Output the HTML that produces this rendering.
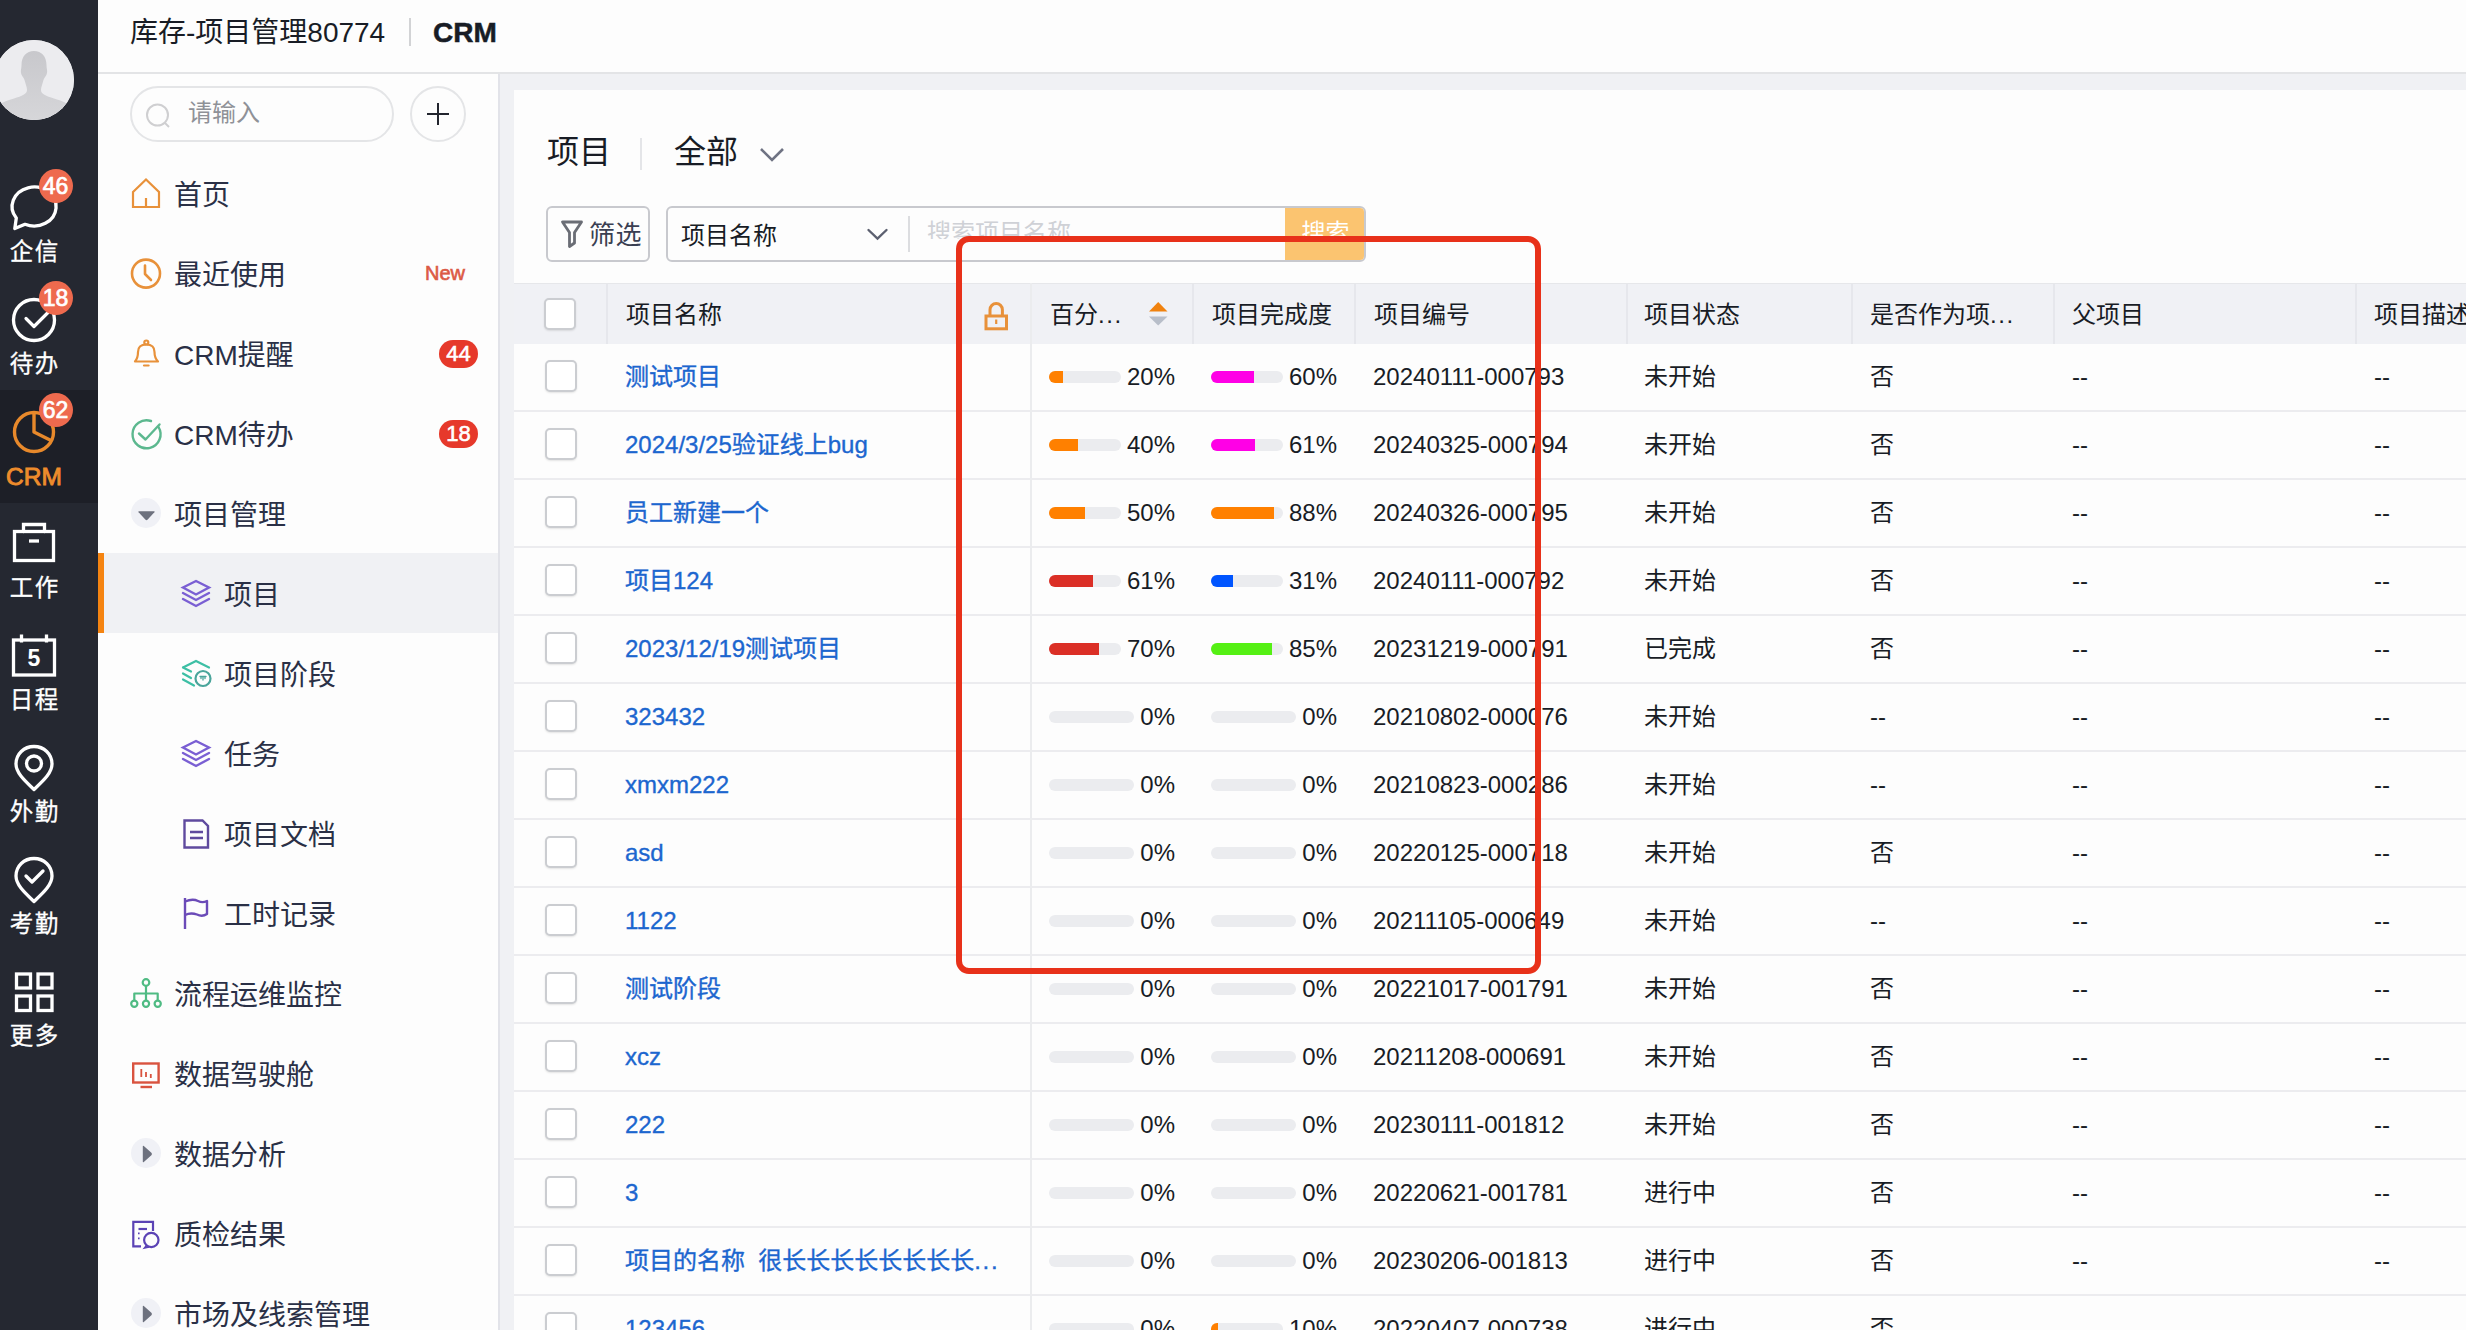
<!DOCTYPE html>
<html lang="zh-CN">
<head>
<meta charset="utf-8">
<title>CRM</title>
<style>
*{box-sizing:border-box;margin:0;padding:0}
html,body{width:2466px;height:1330px;overflow:hidden;background:#fdfdfd}
body{font-family:"Liberation Sans","Noto Sans CJK SC",sans-serif;color:#181c25;position:relative}
.abs{position:absolute}
/* dark side bar */
#side{position:absolute;left:0;top:0;width:98px;height:1330px;background:#252831}
#side .sel{position:absolute;left:0;top:390px;width:98px;height:113px;background:#1d1f27}
#avatar{position:absolute;left:-6px;top:40px;width:80px;height:80px;border-radius:50%;background:#ececef;overflow:hidden}
.sl{position:absolute;left:0;width:68px;text-align:center;color:#fff;font-size:23.5px;line-height:30px;letter-spacing:1.6px;padding-left:1.6px;-webkit-text-stroke:0.3px #fff}
.si{position:absolute}
.bd{position:absolute;width:34px;height:34px;border-radius:17px;background:#ee6a4e;color:#fff;font-size:23px;line-height:34px;text-align:center;-webkit-text-stroke:0.7px #fff}
/* header */
#hdr{position:absolute;left:98px;top:0;width:2368px;height:74px;background:#fdfdfd;border-bottom:2px solid #e3e4e6}
#hdr .t1{position:absolute;left:32px;top:15px;font-size:28px;line-height:36px;color:#181c25}
#hdr .sp{position:absolute;left:311px;top:18px;width:2px;height:28px;background:#d2d3d5}
#hdr .t2{position:absolute;left:335px;top:15px;font-size:28px;line-height:36px;font-weight:bold;color:#181c25;-webkit-text-stroke:0.5px #181c25}
/* nav */
#nav{position:absolute;left:98px;top:74px;width:400px;height:1256px;background:#fdfdfd}
#navb{position:absolute;left:498px;top:74px;width:2px;height:1256px;background:#e2e3e9}
.ni{position:absolute;left:0;width:400px;height:80px}
.ni .tx{position:absolute;top:25px;font-size:28px;line-height:36px;color:#2a3046;white-space:nowrap}
.ni svg{position:absolute}
.ni.on{background:#f0f1f4}
.ni.on:before{content:"";position:absolute;left:0;top:0;width:6px;height:80px;background:#f58411}
.nb{position:absolute;left:341px;top:27px;width:39px;height:28px;border-radius:14px;background:#e6392b;color:#fff;font-size:22px;line-height:28px;text-align:center;-webkit-text-stroke:0.6px #fff}
.arr{position:absolute;left:33px;top:25px;width:30px;height:30px;border-radius:50%;background:#f0f1f6}
/* main */
#main{position:absolute;left:500px;top:74px;width:1966px;height:1256px;background:#f0f1f4}
#card{position:absolute;left:514px;top:90px;width:1952px;height:1240px;background:#fdfdfd}
.h1{position:absolute;top:130px;font-size:32px;line-height:44px;color:#181c25}
#fbtn{position:absolute;left:546px;top:206px;width:104px;height:56px;border:2px solid #c8c9ce;border-radius:6px;background:#fdfdfd}
#fbtn span{position:absolute;left:41px;top:9px;font-size:26px;letter-spacing:.5px;line-height:36px;color:#3a3f52}
#sbox{position:absolute;left:666px;top:206px;width:700px;height:56px;border:2px solid #c8c9ce;border-radius:6px;background:#fdfdfd;overflow:hidden}
#sbox .s1{position:absolute;left:13px;top:10px;font-size:24px;line-height:36px;color:#181c25}
#sbox .dv{position:absolute;left:240px;top:8px;width:2px;height:36px;background:#dcdde0}
#sbox .ph{position:absolute;left:259px;top:7px;height:24px;overflow:hidden;font-size:24px;line-height:36px;color:#cfd1d6;white-space:nowrap}
#sbox .go{position:absolute;left:617px;top:-2px;width:81px;height:56px;background:#fbc470;color:#fff;font-size:24px;line-height:36px;text-align:center}
#sbox .go span{display:block;height:33px;overflow:hidden;padding-top:9px}
/* table */
#th{position:absolute;left:514px;top:283px;width:1952px;height:61px;background:#f0f1f5;border-top:1px solid #e6e7ea}
#th .h{position:absolute;top:13px;font-size:24px;line-height:36px;color:#181c25;white-space:nowrap}
#th .vl{position:absolute;top:0;width:2px;height:61px;background:#e6e7ec}
.row{position:absolute;left:514px;width:1952px;height:68px;border-bottom:2px solid #ececef;background:#fdfdfd}
.cb{position:absolute;left:31px;top:16px;width:32px;height:32px;border:2px solid #cbcdd1;border-radius:5px;background:#fff;box-shadow:0 1px 2px rgba(0,0,0,.10)}
.c{position:absolute;top:15px;font-size:24px;line-height:36px;white-space:nowrap;color:#181c25}
.c a{color:#1c66cf;-webkit-text-stroke:0.35px #1c66cf}
.c-name{left:111px}
.c-p1{left:535px;width:126px}
.c-p2{left:697px;width:126px}
.c-no{left:859px}
.c-st{left:1130px}
.c-is{left:1356px}
.c-pa{left:1558px}
.c-de{left:1860px}
.pg{display:flex;align-items:center;width:126px}
.tr{flex:1;height:12px;border-radius:6px;background:#ebecef;overflow:hidden;display:block;position:relative;top:0}
.tr i{display:block;height:12px}
.pv{margin-left:6px}
#fix{position:absolute;left:1030px;top:283px;width:2px;height:1047px;background:#ebecee}
#red{position:absolute;left:956px;top:236px;width:585px;height:738px;border:6.5px solid #e8311a;border-radius:13px}
.dt{font-weight:normal;letter-spacing:1.6px}
</style>
</head>
<body>
<div id="hdr"><span class="t1">库存-项目管理80774</span><span class="sp"></span><span class="t2">CRM</span></div>

<div id="nav">
  <div class="abs" style="left:32px;top:12px;width:264px;height:56px;border:2px solid #e4e5e7;border-radius:28px"></div>
  <svg class="abs" style="left:46px;top:28px" width="30" height="30" viewBox="0 0 30 30"><circle cx="13.5" cy="13" r="10.5" fill="none" stroke="#cfcfd1" stroke-width="2"/><path d="M21 21l4 4" stroke="#cfcfd1" stroke-width="2" fill="none"/></svg>
  <span class="abs" style="left:90px;top:21px;font-size:24px;line-height:36px;color:#8f9197">请输入</span>
  <div class="abs" style="left:312px;top:12px;width:56px;height:56px;border:2px solid #e4e5e7;border-radius:28px"></div>
  <svg class="abs" style="left:328px;top:28px" width="24" height="24" viewBox="0 0 24 24"><path d="M12 1v22M1 12h22" stroke="#22252e" stroke-width="2" fill="none"/></svg>

  <div class="ni" style="top:79px"><span class="tx" style="left:76px">首页</span></div>
  <div class="ni" style="top:159px"><span class="tx" style="left:76px">最近使用</span><span class="abs" style="left:327px;top:27px;font-size:20px;line-height:26px;color:#dc5a45;-webkit-text-stroke:0.6px #dc5a45">New</span></div>
  <div class="ni" style="top:239px"><span class="tx" style="left:76px">CRM提醒</span><span class="nb">44</span></div>
  <div class="ni" style="top:319px"><span class="tx" style="left:76px">CRM待办</span><span class="nb">18</span></div>
  <div class="ni" style="top:399px"><span class="arr"></span><span class="tx" style="left:76px">项目管理</span></div>
  <div class="ni on" style="top:479px"><span class="tx" style="left:126px">项目</span></div>
  <div class="ni" style="top:559px"><span class="tx" style="left:126px">项目阶段</span></div>
  <div class="ni" style="top:639px"><span class="tx" style="left:126px">任务</span></div>
  <div class="ni" style="top:719px"><span class="tx" style="left:126px">项目文档</span></div>
  <div class="ni" style="top:799px"><span class="tx" style="left:126px">工时记录</span></div>
  <div class="ni" style="top:879px"><span class="tx" style="left:76px">流程运维监控</span></div>
  <div class="ni" style="top:959px"><span class="tx" style="left:76px">数据驾驶舱</span></div>
  <div class="ni" style="top:1039px"><span class="arr"></span><span class="tx" style="left:76px">数据分析</span></div>
  <div class="ni" style="top:1119px"><span class="tx" style="left:76px">质检结果</span></div>
  <div class="ni" style="top:1199px"><span class="arr"></span><span class="tx" style="left:76px">市场及线索管理</span></div>
</div>
<div id="navb"></div>

<div id="main"></div>
<div id="card"></div>
<span class="h1" style="left:547px">项目</span>
<div class="abs" style="left:640px;top:138px;width:2px;height:32px;background:#e4e5e8"></div>
<span class="h1" style="left:674px">全部</span>
<svg class="abs" style="left:758px;top:146px" width="28" height="18" viewBox="0 0 28 18"><path d="M3 3l11 11 11-11" fill="none" stroke="#6f7383" stroke-width="2.6"/></svg>

<div id="fbtn"><span>筛选</span></div>
<div id="sbox"><span class="s1">项目名称</span><span class="dv"></span><span class="ph">搜索项目名称</span><div class="go"><span>搜索</span></div></div>

<div id="th">
  <span class="cb" style="top:14px;left:30px"></span>
  <span class="vl" style="left:92px"></span>
  <span class="h" style="left:112px">项目名称</span>
  <span class="vl" style="left:516px"></span>
  <span class="h" style="left:536px">百分<b class="dt">...</b></span>
  <span class="vl" style="left:678px"></span>
  <span class="h" style="left:698px">项目完成度</span>
  <span class="vl" style="left:840px"></span>
  <span class="h" style="left:860px">项目编号</span>
  <span class="vl" style="left:1112px"></span>
  <span class="h" style="left:1130px">项目状态</span>
  <span class="vl" style="left:1337px"></span>
  <span class="h" style="left:1356px">是否作为项<b class="dt">...</b></span>
  <span class="vl" style="left:1539px"></span>
  <span class="h" style="left:1558px">父项目</span>
  <span class="vl" style="left:1841px"></span>
  <span class="h" style="left:1860px">项目描述</span>
</div>
<div class="row" style="top:344px">
<span class="cb"></span>
<span class="c c-name"><a>测试项目</a></span>
<span class="c c-p1"><span class="pg"><span class="tr"><i style="width:20%;background:#ff8000"></i></span><span class="pv">20%</span></span></span>
<span class="c c-p2"><span class="pg"><span class="tr"><i style="width:60%;background:#ff00e6"></i></span><span class="pv">60%</span></span></span>
<span class="c c-no">20240111-000793</span>
<span class="c c-st">未开始</span>
<span class="c c-is">否</span>
<span class="c c-pa">--</span>
<span class="c c-de">--</span>
</div>
<div class="row" style="top:412px">
<span class="cb"></span>
<span class="c c-name"><a>2024/3/25验证线上bug</a></span>
<span class="c c-p1"><span class="pg"><span class="tr"><i style="width:40%;background:#ff8000"></i></span><span class="pv">40%</span></span></span>
<span class="c c-p2"><span class="pg"><span class="tr"><i style="width:61%;background:#ff00e6"></i></span><span class="pv">61%</span></span></span>
<span class="c c-no">20240325-000794</span>
<span class="c c-st">未开始</span>
<span class="c c-is">否</span>
<span class="c c-pa">--</span>
<span class="c c-de">--</span>
</div>
<div class="row" style="top:480px">
<span class="cb"></span>
<span class="c c-name"><a>员工新建一个</a></span>
<span class="c c-p1"><span class="pg"><span class="tr"><i style="width:50%;background:#ff8000"></i></span><span class="pv">50%</span></span></span>
<span class="c c-p2"><span class="pg"><span class="tr"><i style="width:88%;background:#ff8000"></i></span><span class="pv">88%</span></span></span>
<span class="c c-no">20240326-000795</span>
<span class="c c-st">未开始</span>
<span class="c c-is">否</span>
<span class="c c-pa">--</span>
<span class="c c-de">--</span>
</div>
<div class="row" style="top:548px">
<span class="cb"></span>
<span class="c c-name"><a>项目124</a></span>
<span class="c c-p1"><span class="pg"><span class="tr"><i style="width:61%;background:#db2f26"></i></span><span class="pv">61%</span></span></span>
<span class="c c-p2"><span class="pg"><span class="tr"><i style="width:31%;background:#0055ff"></i></span><span class="pv">31%</span></span></span>
<span class="c c-no">20240111-000792</span>
<span class="c c-st">未开始</span>
<span class="c c-is">否</span>
<span class="c c-pa">--</span>
<span class="c c-de">--</span>
</div>
<div class="row" style="top:616px">
<span class="cb"></span>
<span class="c c-name"><a>2023/12/19测试项目</a></span>
<span class="c c-p1"><span class="pg"><span class="tr"><i style="width:70%;background:#db2f26"></i></span><span class="pv">70%</span></span></span>
<span class="c c-p2"><span class="pg"><span class="tr"><i style="width:85%;background:#55f014"></i></span><span class="pv">85%</span></span></span>
<span class="c c-no">20231219-000791</span>
<span class="c c-st">已完成</span>
<span class="c c-is">否</span>
<span class="c c-pa">--</span>
<span class="c c-de">--</span>
</div>
<div class="row" style="top:684px">
<span class="cb"></span>
<span class="c c-name"><a>323432</a></span>
<span class="c c-p1"><span class="pg"><span class="tr"></span><span class="pv">0%</span></span></span>
<span class="c c-p2"><span class="pg"><span class="tr"></span><span class="pv">0%</span></span></span>
<span class="c c-no">20210802-000076</span>
<span class="c c-st">未开始</span>
<span class="c c-is">--</span>
<span class="c c-pa">--</span>
<span class="c c-de">--</span>
</div>
<div class="row" style="top:752px">
<span class="cb"></span>
<span class="c c-name"><a>xmxm222</a></span>
<span class="c c-p1"><span class="pg"><span class="tr"></span><span class="pv">0%</span></span></span>
<span class="c c-p2"><span class="pg"><span class="tr"></span><span class="pv">0%</span></span></span>
<span class="c c-no">20210823-000286</span>
<span class="c c-st">未开始</span>
<span class="c c-is">--</span>
<span class="c c-pa">--</span>
<span class="c c-de">--</span>
</div>
<div class="row" style="top:820px">
<span class="cb"></span>
<span class="c c-name"><a>asd</a></span>
<span class="c c-p1"><span class="pg"><span class="tr"></span><span class="pv">0%</span></span></span>
<span class="c c-p2"><span class="pg"><span class="tr"></span><span class="pv">0%</span></span></span>
<span class="c c-no">20220125-000718</span>
<span class="c c-st">未开始</span>
<span class="c c-is">否</span>
<span class="c c-pa">--</span>
<span class="c c-de">--</span>
</div>
<div class="row" style="top:888px">
<span class="cb"></span>
<span class="c c-name"><a>1122</a></span>
<span class="c c-p1"><span class="pg"><span class="tr"></span><span class="pv">0%</span></span></span>
<span class="c c-p2"><span class="pg"><span class="tr"></span><span class="pv">0%</span></span></span>
<span class="c c-no">20211105-000649</span>
<span class="c c-st">未开始</span>
<span class="c c-is">--</span>
<span class="c c-pa">--</span>
<span class="c c-de">--</span>
</div>
<div class="row" style="top:956px">
<span class="cb"></span>
<span class="c c-name"><a>测试阶段</a></span>
<span class="c c-p1"><span class="pg"><span class="tr"></span><span class="pv">0%</span></span></span>
<span class="c c-p2"><span class="pg"><span class="tr"></span><span class="pv">0%</span></span></span>
<span class="c c-no">20221017-001791</span>
<span class="c c-st">未开始</span>
<span class="c c-is">否</span>
<span class="c c-pa">--</span>
<span class="c c-de">--</span>
</div>
<div class="row" style="top:1024px">
<span class="cb"></span>
<span class="c c-name"><a>xcz</a></span>
<span class="c c-p1"><span class="pg"><span class="tr"></span><span class="pv">0%</span></span></span>
<span class="c c-p2"><span class="pg"><span class="tr"></span><span class="pv">0%</span></span></span>
<span class="c c-no">20211208-000691</span>
<span class="c c-st">未开始</span>
<span class="c c-is">否</span>
<span class="c c-pa">--</span>
<span class="c c-de">--</span>
</div>
<div class="row" style="top:1092px">
<span class="cb"></span>
<span class="c c-name"><a>222</a></span>
<span class="c c-p1"><span class="pg"><span class="tr"></span><span class="pv">0%</span></span></span>
<span class="c c-p2"><span class="pg"><span class="tr"></span><span class="pv">0%</span></span></span>
<span class="c c-no">20230111-001812</span>
<span class="c c-st">未开始</span>
<span class="c c-is">否</span>
<span class="c c-pa">--</span>
<span class="c c-de">--</span>
</div>
<div class="row" style="top:1160px">
<span class="cb"></span>
<span class="c c-name"><a>3</a></span>
<span class="c c-p1"><span class="pg"><span class="tr"></span><span class="pv">0%</span></span></span>
<span class="c c-p2"><span class="pg"><span class="tr"></span><span class="pv">0%</span></span></span>
<span class="c c-no">20220621-001781</span>
<span class="c c-st">进行中</span>
<span class="c c-is">否</span>
<span class="c c-pa">--</span>
<span class="c c-de">--</span>
</div>
<div class="row" style="top:1228px">
<span class="cb"></span>
<span class="c c-name"><a>项目的名称&nbsp; 很长长长长长长长长<b class="dt">...</b></a></span>
<span class="c c-p1"><span class="pg"><span class="tr"></span><span class="pv">0%</span></span></span>
<span class="c c-p2"><span class="pg"><span class="tr"></span><span class="pv">0%</span></span></span>
<span class="c c-no">20230206-001813</span>
<span class="c c-st">进行中</span>
<span class="c c-is">否</span>
<span class="c c-pa">--</span>
<span class="c c-de">--</span>
</div>
<div class="row" style="top:1296px">
<span class="cb"></span>
<span class="c c-name"><a>123456</a></span>
<span class="c c-p1"><span class="pg"><span class="tr"></span><span class="pv">0%</span></span></span>
<span class="c c-p2"><span class="pg"><span class="tr"><i style="width:10%;background:#ff8000"></i></span><span class="pv">10%</span></span></span>
<span class="c c-no">20220407-000738</span>
<span class="c c-st">进行中</span>
<span class="c c-is">否</span>
<span class="c c-pa">--</span>
<span class="c c-de">--</span>
</div>
<div id="fix"></div>

<div id="side">
  <div class="sel"></div>
  <div id="avatar"><svg width="80" height="80" viewBox="0 0 80 80"><defs><linearGradient id="ag" x1="0" y1="0" x2="0" y2="1"><stop offset="0" stop-color="#c8c8cc"/><stop offset="1" stop-color="#d6d6d9"/></linearGradient></defs><rect width="80" height="80" fill="#ececef"/><path d="M40 11 C47.5 11 52.5 16.5 52.5 25 C52.5 29 53.5 30 53 33 C52.5 36 50.5 37 49.5 40 C48.5 44 47 47 47 50 C47 54 52 56 60 58.5 C68 61 74 63 78 68 L80 80 L0 80 L2 68 C6 63 12 61 20 58.5 C28 56 33 54 33 50 C33 47 31.5 44 30.5 40 C29.5 37 27.5 36 27 33 C26.5 30 27.5 29 27.5 25 C27.5 16.5 32.5 11 40 11Z" fill="url(#ag)"/></svg></div>
  <span class="sl" style="top:237px">企信</span>
  <span class="sl" style="top:349px">待办</span>
  <span class="sl" style="top:462px;color:#ee8c2c;-webkit-text-stroke:0.9px #ee8c2c;font-size:24.5px;letter-spacing:0;padding-left:0">CRM</span>
  <span class="sl" style="top:573px">工作</span>
  <span class="sl" style="top:685px">日程</span>
  <span class="sl" style="top:797px">外勤</span>
  <span class="sl" style="top:909px">考勤</span>
  <span class="sl" style="top:1021px">更多</span>
</div>


<!-- ICONS (page coordinates) -->
<svg id="ico" class="abs" style="left:0;top:0;pointer-events:none" width="2466" height="1330" viewBox="0 0 2466 1330" fill="none" stroke-linecap="round" stroke-linejoin="round">
 <!-- side bar icons -->
 <g stroke="#fff" stroke-width="3.3">
  <!-- chat -->
  <path d="M16.3 218 A22 19.5 0 1 1 25 224.3 L14.8 228.6 Z"/>
  <!-- todo check circle -->
  <circle cx="34" cy="320" r="20.5"/>
  <path d="M26 318.5l8 8 14-14" stroke-width="3.2"/>
  <!-- briefcase -->
  <rect x="14.5" y="531.5" width="39" height="29" stroke-linejoin="miter"/>
  <path d="M23.5 531.5v-7h21v7" stroke-linejoin="miter"/>
  <path d="M29 541h10" stroke-linecap="butt"/>
  <!-- calendar -->
  <rect x="13.5" y="640" width="41" height="35" stroke-linejoin="miter"/>
  <path d="M21.5 634.5v8M46.5 634.5v8" stroke-linecap="butt"/>
  <!-- pin -->
  <path d="M34 789.5 C25 781 16 773 16 764 C16 754 24 746.5 34 746.5 C44 746.5 52 754 52 764 C52 773 43 781 34 789.5Z"/>
  <circle cx="34" cy="763.5" r="7.5"/>
  <!-- pin check -->
  <path d="M34 901.5 C25 893 16 885 16 876 C16 866 24 858.5 34 858.5 C44 858.5 52 866 52 876 C52 885 43 893 34 901.5Z"/>
  <path d="M26 876l6 6 11-11"/>
  <!-- grid -->
  <g stroke-linejoin="miter"><rect x="16.5" y="974" width="14" height="14"/><rect x="38" y="974" width="14" height="14"/><rect x="16.5" y="996" width="14" height="14.5"/><rect x="38" y="996" width="14" height="14.5"/></g>
 </g>
 <!-- crm pie -->
 <g stroke="#e8892b" stroke-width="3.4">
  <circle cx="34" cy="432" r="19.5"/>
  <path d="M34 412.5V432l18 9" stroke-linecap="butt"/>
 </g>

 <!-- nav icons -->
 <g stroke="#e8913a" stroke-width="2.2">
  <!-- home -->
  <path d="M133 192 L146 179.5 L159 192 V207 H133 Z" stroke-linejoin="miter"/>
  <path d="M146 198v9" stroke-linecap="butt"/>
  <!-- clock -->
  <circle cx="146" cy="273.6" r="14" stroke-width="2.6"/>
  <path d="M145 265.5v8.5l6 6" stroke-width="2.6"/>
  <!-- bell -->
  <circle cx="146.3" cy="342.5" r="2"/>
  <path d="M135 361.5 C138 358 138 355 138 352 C138 346.5 141.5 344.5 146.3 344.5 C151 344.5 154.5 346.5 154.5 352 C154.5 355 154.5 358 158 361.5 Z"/>
  <path d="M144 365.5h4.6" />
 </g>
 <g stroke="#5cb88f" stroke-width="2.4">
  <path d="M158.5 427 A14 14 0 1 1 151 421"/>
  <path d="M139 433.5l6.5 6 14-15"/>
 </g>
 <!-- layers purple -->
 <g stroke="#7a5fd3" stroke-width="2.4" stroke-linejoin="miter">
  <path d="M196 581 L209 587.5 L196 594.5 L183 587.5 Z"/>
  <path d="M183 593 L196 600 L209 593 M183 599 L196 606 L209 599"/>
  <path d="M196 741 L209 747.5 L196 754.5 L183 747.5 Z"/>
  <path d="M183 753 L196 760 L209 753 M183 759 L196 766 L209 759"/>
 </g>
 <!-- stage teal -->
 <g stroke="#3dbfa5" stroke-width="2.2" stroke-linejoin="miter">
  <path d="M183 667.5 L196 661 L209 667.5 M183 667.5 L191 671.5 M183 673.5 L191 678 M183 679.5 L194 685.5"/>
  <circle cx="203" cy="678.5" r="7.5" stroke="#4aa59b"/>
  <path d="M200 676.5h6M201 676.5v2M203 676.5v3.5M205 676.5v2" stroke-width="1.3" stroke="#4aa59b"/>
 </g>
 <!-- doc -->
 <g stroke="#5f4a9e" stroke-width="2.4" stroke-linejoin="miter" stroke-linecap="butt">
  <path d="M184.5 820.5 H202.5 L208 826 V847.5 H184.5 Z"/>
  <path d="M190 832h13M190 838h13"/>
 </g>
 <!-- flag -->
 <g stroke="#6b4bb8" stroke-width="2.4" stroke-linecap="butt">
  <path d="M185 898v31"/>
  <path d="M185 901.5 C191 899 195 899.5 198 901 C202 903 205 902 207 901 V914 C204 916 200 916 197 914.5 C193 913 189 913 185 915"/>
 </g>
 <!-- org -->
 <g stroke="#4fbb83" stroke-width="2.2" stroke-linecap="butt">
  <circle cx="146" cy="982.5" r="3.3"/><circle cx="134.3" cy="1003.7" r="3.1"/><circle cx="146" cy="1003.7" r="3.1"/><circle cx="157.7" cy="1003.7" r="3.1"/>
  <path d="M146 986v14.5M134.3 1000.5v-7h23.4v7"/>
 </g>
 <!-- monitor -->
 <g stroke="#d9533f" stroke-width="2.4" stroke-linejoin="miter" stroke-linecap="butt">
  <rect x="133.2" y="1063.5" width="25.4" height="19"/>
  <path d="M140.5 1087h11.5"/>
  <path d="M141.3 1069v8M146 1072v5M150.8 1074v4" stroke-width="1.8"/>
 </g>
 <!-- qc -->
 <g stroke="#5b43b5" stroke-width="2.2" stroke-linejoin="miter" stroke-linecap="butt">
  <path d="M141 1246.3 H133.3 V1221.8 H153 V1231"/>
  <path d="M138.5 1229h8.5"/>
  <path d="M138 1233.3h1.6M138 1238.3h1.6" stroke-width="1.8"/>
  <circle cx="151.3" cy="1240" r="7.2" fill="#fdfdfd"/>
  <path d="M146.5 1245.5l-2 2.5 4.5-1" stroke-width="1.6"/>
 </g>
 <!-- tree arrows -->
 <g stroke="none" fill="#6d717e">
  <path d="M139 511.3 h15 q1.2 0 .4 1 l-6.7 7.3 q-1.2 1.2 -2.4 0 l-6.7 -7.3 q-.8 -1 .4 -1z"/>
  <path d="M142.8 1146.5 v15 q0 1.2 1 .4 l7.6 -6.7 q1.2 -1.2 0 -2.4 l-7.6 -6.7 q-1 -.8 -1 .4z"/>
  <path d="M142.8 1306.5 v15 q0 1.2 1 .4 l7.6 -6.7 q1.2 -1.2 0 -2.4 l-7.6 -6.7 q-1 -.8 -1 .4z"/>
 </g>

 <!-- funnel -->
 <path d="M562.5 222 H581.5 L574.5 232.5 V243 L569.5 246.5 V232.5 Z" stroke="#6a6d75" stroke-width="2.8" stroke-linejoin="round"/>
 <!-- select chevron -->
 <path d="M868.5 230l9 8.5 9-8.5" stroke="#5c6070" stroke-width="2.4" stroke-linejoin="miter"/>
 <!-- lock -->
 <g stroke="#e8913a" stroke-width="3" stroke-linejoin="miter" stroke-linecap="butt">
  <rect x="986" y="316" width="20.5" height="12.8"/>
  <path d="M990 316 v-6.3 a6.2 6.2 0 0 1 12.4 0 v6.3"/>
  <path d="M996.2 319.5v4.5" stroke-width="2.2"/>
 </g>
 <!-- sort -->
 <path d="M1149 311.5 L1158.2 302 L1167.5 311.5 Z" fill="#f0820f" stroke="none"/>
 <path d="M1149 316.5 L1158.2 325.5 L1167.5 316.5 Z" fill="#b8bec9" stroke="none"/>
</svg>
<span class="abs" style="left:24px;top:644px;width:20px;text-align:center;font-size:23px;line-height:28px;font-weight:bold;color:#fff">5</span>

<span class="bd" style="left:38.5px;top:169px">46</span>
<span class="bd" style="left:38.5px;top:281px">18</span>
<span class="bd" style="left:38.5px;top:393px">62</span>
<div id="red"></div>
</body>
</html>
